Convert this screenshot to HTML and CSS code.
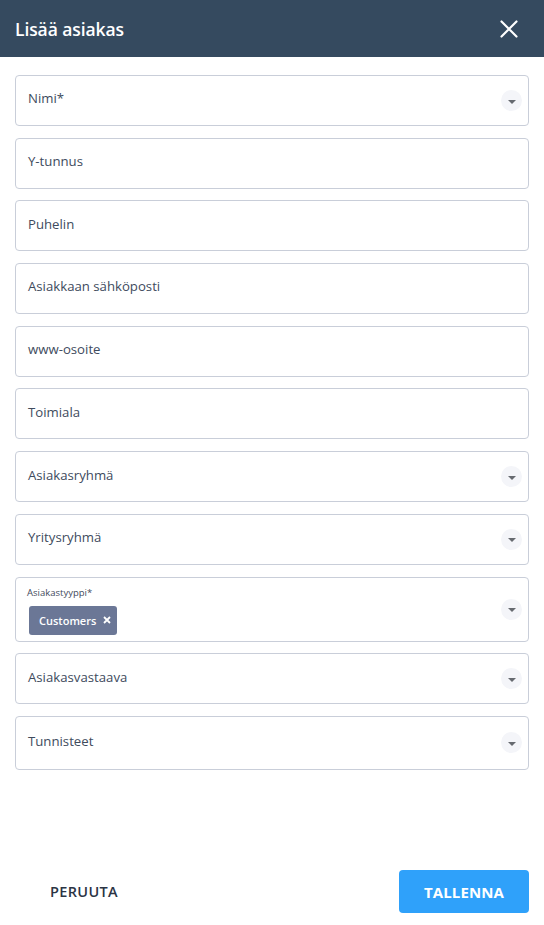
FILE: index.html
```html
<!DOCTYPE html>
<html lang="fi">
<head>
<meta charset="utf-8">
<link rel="stylesheet" href="styles.css">
</head>
<body>
<div class="dialog">
  <header class="header">
    <h1 class="title">Lisää asiakas</h1>
    <button class="close" aria-label="Sulje">
      <svg width="18" height="18" viewBox="0 0 18 18"><path d="M1.5 1.5 L16.5 16.5 M16.5 1.5 L1.5 16.5" stroke="#fff" stroke-width="2.2" stroke-linecap="round"/></svg>
    </button>
  </header>
  <main class="form">
    <div class="field"><span class="ph">Nimi*</span><span class="dd"><i class="tri"></i></span></div>
    <div class="field"><span class="ph">Y-tunnus</span></div>
    <div class="field"><span class="ph">Puhelin</span></div>
    <div class="field"><span class="ph">Asiakkaan sähköposti</span></div>
    <div class="field"><span class="ph">www-osoite</span></div>
    <div class="field"><span class="ph">Toimiala</span></div>
    <div class="field"><span class="ph">Asiakasryhmä</span><span class="dd"><i class="tri"></i></span></div>
    <div class="field"><span class="ph">Yritysryhmä</span><span class="dd"><i class="tri"></i></span></div>
    <div class="field field-tags">
      <div class="tagwrap">
        <span class="small-label">Asiakastyyppi*</span>
        <span class="chip">Customers <svg class="chip-x" width="8" height="8" viewBox="0 0 8 8"><path d="M1 1 L7 7 M7 1 L1 7" stroke="#fff" stroke-width="1.8"/></svg></span>
      </div>
      <span class="dd"><i class="tri"></i></span>
    </div>
    <div class="field"><span class="ph">Asiakasvastaava</span><span class="dd"><i class="tri"></i></span></div>
    <div class="field field-last"><span class="ph">Tunnisteet</span><span class="dd"><i class="tri"></i></span></div>
  </main>
  <footer class="footer">
    <button class="btn-cancel">PERUUTA</button>
    <button class="btn-save">TALLENNA</button>
  </footer>
</div>
</body>
</html>
```
FILE: styles.css
```css
* { box-sizing: border-box; }
html, body { margin: 0; padding: 0; }
body {
  font-family: "Open Sans", "Noto Sans", sans-serif;
  background: #fff;
  color: #3a4556;
}
.dialog {
  width: 544px;
  height: 925px;
  display: flex;
  flex-direction: column;
}
.header {
  height: 57px;
  background: #354a5f;
  display: flex;
  align-items: center;
  justify-content: space-between;
  padding: 0 26px 0 15px;
  flex-shrink: 0;
}
.title {
  margin: 0;
  color: #fff;
  font-size: 17.5px;
  font-weight: 600;
  letter-spacing: -0.1px;
}
.close {
  background: none;
  border: 0;
  padding: 0;
  width: 18px;
  height: 18px;
  display: flex;
}
.form {
  padding: 18px 15px 0 15px;
  display: flex;
  flex-direction: column;
  gap: 11.7px;
}
.field {
  height: 51px;
  border: 1px solid #c9ced9;
  border-radius: 4px;
  display: flex;
  align-items: center;
  justify-content: space-between;
  padding: 0 6px 0 12px;
  font-size: 13.2px;
  color: #404b5d;
}
.ph { line-height: 1; margin-bottom: 3px; }
.dd {
  width: 21px;
  height: 21px;
  border-radius: 50%;
  background: #f4f5f9;
  display: flex;
  align-items: center;
  justify-content: center;
}
.tri {
  width: 0;
  height: 0;
  border-left: 4.5px solid transparent;
  border-right: 4.5px solid transparent;
  border-top: 4.5px solid #666a70;
  margin-top: 2px;
}
.field-tags {
  height: 65px;
  align-items: center;
}
.tagwrap {
  display: flex;
  flex-direction: column;
  align-items: flex-start;
  gap: 7px;
  margin-top: 2px;
}
.small-label {
  font-size: 9.5px;
  color: #3f4a5c;
  margin-left: -1px;
}
.chip {
  background: #6b7796;
  color: #fff;
  font-size: 11px;
  font-weight: 600;
  border-radius: 3px;
  height: 29px;
  padding: 0 6px 0 10px;
  display: flex;
  align-items: center;
  margin-left: 1px;
}
.chip-x {
  margin-left: 7px;
}
.field-last { height: 54px; }
.footer {
  margin-top: auto;
  padding: 0 15px 12px 15px;
  display: flex;
  justify-content: space-between;
  align-items: center;
}
.btn-cancel {
  background: none;
  border: 0;
  font-family: inherit;
  font-size: 14.5px;
  font-weight: 600;
  color: #2b3444;
  padding: 0 35px;
  height: 43px;
  letter-spacing: 0.35px;
}
.btn-save {
  background: #2fa1fa;
  border: 0;
  border-radius: 4px;
  color: #fff;
  font-family: inherit;
  font-size: 15px;
  font-weight: 700;
  width: 130px;
  height: 43px;
  letter-spacing: 0.1px;
}
```
